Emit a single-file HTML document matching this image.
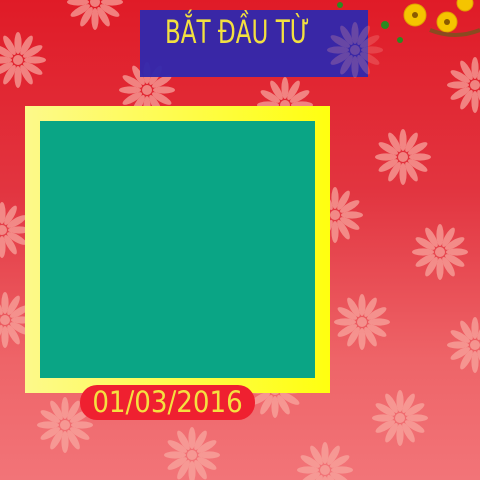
<!DOCTYPE html>
<html><head><meta charset="utf-8"><style>
body{margin:0;width:480px;height:480px;overflow:hidden;position:relative;background:linear-gradient(#e01b27 0%,#e23540 40%,#ee6468 75%,#f27478 100%);font-family:"Liberation Sans","DejaVu Sans",sans-serif}
svg{position:absolute;left:0;top:0}
.blue{position:absolute;left:140px;top:10px;width:228px;height:67px;background:rgba(50,40,172,0.96)}
.t{position:absolute;left:165px;top:13px;font-size:32px;color:#f2e040;font-family:"DejaVu Sans Condensed","Liberation Sans Narrow",sans-serif;transform:scaleX(0.8);transform-origin:left}
.frame{position:absolute;left:25px;top:106px;width:305px;height:287px;background:linear-gradient(90deg,#fdf98a,#ffff10)}
.in{position:absolute;left:40px;top:121px;width:275px;height:257px;background:#0aa585}
.pill{position:absolute;left:80px;top:385px;width:175px;height:35px;border-radius:17px;background:#ef2030;color:#f5e040;font-size:29px;line-height:35px;text-align:center;font-family:"DejaVu Sans Condensed",sans-serif}
</style></head><body>
<svg width="480" height="480">
<defs><g id="f" fill="#f9aaa2" opacity="0.7">
<g id="p"><ellipse cx="0" cy="-17" rx="3.6" ry="11"/></g>
<use href="#p" transform="rotate(30)"/><use href="#p" transform="rotate(60)"/><use href="#p" transform="rotate(90)"/><use href="#p" transform="rotate(120)"/><use href="#p" transform="rotate(150)"/><use href="#p" transform="rotate(180)"/><use href="#p" transform="rotate(210)"/><use href="#p" transform="rotate(240)"/><use href="#p" transform="rotate(270)"/><use href="#p" transform="rotate(300)"/><use href="#p" transform="rotate(330)"/>
<circle r="5"/></g></defs>
<use href="#f" x="18" y="60"/><use href="#f" x="147" y="90"/><use href="#f" x="95" y="2"/>
<use href="#f" x="475" y="85"/><use href="#f" x="403" y="157"/>
<use href="#f" x="440" y="252"/><use href="#f" x="362" y="322"/><use href="#f" x="475" y="345"/>
<use href="#f" x="400" y="418"/><use href="#f" x="192" y="455"/><use href="#f" x="65" y="425"/>
<use href="#f" x="275" y="390"/><use href="#f" x="325" y="470"/><use href="#f" x="285" y="105"/>
<use href="#f" x="2" y="230"/><use href="#f" x="5" y="320"/><use href="#f" x="335" y="215"/>
<g fill="#f5c400" stroke="#e0a000"><circle cx="415" cy="15" r="11"/><circle cx="447" cy="22" r="10"/><circle cx="465" cy="3" r="8"/></g>
<g fill="#8a5a00"><circle cx="415" cy="15" r="3"/><circle cx="447" cy="22" r="3"/></g>
<g fill="#2a8a20"><circle cx="340" cy="5" r="3"/><circle cx="385" cy="25" r="4"/><circle cx="400" cy="40" r="3"/></g>
<path d="M430 30 Q455 40 480 30" stroke="#8a4a20" stroke-width="4" fill="none"/>
</svg>
<div class="blue"></div>
<svg width="480" height="480"><use href="#f" x="355" y="50" opacity="0.35"/></svg>
<div class="t">BẮT ĐẦU TỪ</div>
<div class="frame"></div><div class="in"></div>
<div class="pill">01/03/2016</div>
</body></html>
